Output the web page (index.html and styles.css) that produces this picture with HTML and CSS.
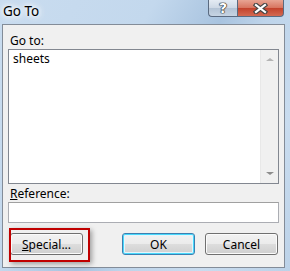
FILE: index.html
```html
<!DOCTYPE html>
<html lang="en">

<head>
    <meta charset="UTF-8">
    <title>Go To</title>
    <link rel="stylesheet" href="styles.css">
</head>

<body>
    <div class="window">
        <div class="titlebar">
            <div class="caption">Go To</div>
            <div class="caption-buttons">
                <div class="cap-btn help">?</div>
                <div class="cap-btn close">
                    <svg width="15" height="11" viewBox="0 0 15 11">
                        <path d="M3 2 L12 9 M12 2 L3 9" stroke="#464646" stroke-width="4.5" stroke-linecap="square"/>
                        <path d="M3 2 L12 9 M12 2 L3 9" stroke="#fff" stroke-width="2.2" stroke-linecap="square"/>
                    </svg>
                </div>
            </div>
        </div>

        <div class="client">
            <div class="label">Go to:</div>
            <div class="listbox">
                <div class="items">
                    <div class="item">sheets</div>
                </div>
                <div class="scrollbar">
                    <div class="arrow up"></div>
                    <div class="arrow down"></div>
                </div>
            </div>

            <div class="label ref-label"><u>R</u>eference:</div>
            <div class="textbox"></div>

            <div class="buttons">
                <div class="special-wrap">
                    <button class="btn"><u>S</u>pecial...</button>
                    <div class="highlight"></div>
                </div>
                <div class="right-buttons">
                    <button class="btn default">OK</button>
                    <button class="btn">Cancel</button>
                </div>
            </div>
        </div>
    </div>
</body>

</html>
```

FILE: styles.css
```css
html, body {
    margin: 0;
    padding: 0;
}

body {
    width: 290px;
    height: 271px;
    overflow: hidden;
    font-family: "Noto Sans", "Open Sans", sans-serif;
    font-size: 12px;
    color: #000;
}

.window {
    width: 290px;
    height: 271px;
    background: linear-gradient(120deg, #c9dcef 0%, #c3d8ed 35%, #a8c3df 52%, #bed4ea 62%, #c9dcef 80%, #bcd2e8 100%);
    display: flex;
    flex-direction: column;
}

.titlebar {
    height: 24px;
    display: flex;
    justify-content: space-between;
    align-items: flex-start;
}

.caption {
    padding: 3px 0 0 3px;
    font-size: 13.5px;
    line-height: 16px;
    text-shadow: 0 0 8px #fff, 0 0 8px #fff, 0 0 4px #fff;
}

.caption-buttons {
    display: flex;
    margin-right: 6px;
}

.cap-btn {
    height: 16px;
    border: 1px solid #5a6a80;
    border-top: none;
    display: flex;
    align-items: center;
    justify-content: center;
}

.help {
    width: 28px;
    border-radius: 0 0 0 4px;
    border-right: none;
    background: linear-gradient(#e4ebf3, #cdd8e5 50%, #b3c3d5 51%, #c6d4e3);
    color: #fff;
    font-family: "DejaVu Sans", sans-serif;
    font-weight: bold;
    font-size: 14px;
    line-height: 16px;
    text-shadow: 0 0 1px #222, 0 0 1px #222, 0 0 1px #222, 0 0 1px #222;
}

.close {
    width: 45px;
    border-radius: 0 0 4px 0;
    background: linear-gradient(#e8a493, #d7735e 50%, #c3412b 51%, #d36a52);
}

.client {
    margin: 0 5px 3px 2px;
    flex: 1;
    background: #f0f0f0;
    border: 1px solid #838c98;
    padding: 0 5px 0 5px;
}

.label {
    padding: 8px 0 0 2px;
    line-height: 16px;
    height: 16px;
}

.listbox {
    height: 133px;
    border: 1px solid #828790;
    background: #fff;
    display: flex;
}

.items {
    flex: 1;
    padding: 1px 4px;
}

.item {
    line-height: 15px;
}

.scrollbar {
    width: 17px;
    background: #f0f0f0;
    border-left: 1px solid #e8e8e8;
    display: flex;
    flex-direction: column;
    justify-content: space-between;
    align-items: center;
    padding: 8px 0 8px;
}

.arrow {
    width: 0;
    height: 0;
    border-left: 4px solid transparent;
    border-right: 4px solid transparent;
}

.arrow.up {
    border-bottom: 3px solid #b4b4b4;
}

.arrow.down {
    border-top: 3px solid #8c8c8c;
}

.ref-label {
    padding-top: 2px;
}

.textbox {
    height: 19px;
    border: 1px solid #abadb3;
    border-top-color: #a0a0a0;
    background: #fff;
}

.buttons {
    margin-top: 10px;
    display: flex;
    justify-content: space-between;
    padding-left: 2px;
}

.right-buttons {
    display: flex;
    gap: 10px;
    margin-right: 1px;
}

.btn {
    width: 73px;
    height: 22px;
    padding: 0;
    font: inherit;
    color: #000;
    border: 1px solid #707070;
    border-radius: 3px;
    background: linear-gradient(#f2f2f2, #ebebeb 50%, #dddddd 51%, #cfcfcf);
    box-shadow: inset 0 0 0 1px #fbfbfb;
}

.btn.default {
    border-color: #3c7fb1;
    box-shadow: inset 0 0 0 1px #48d8fb, inset 0 0 0 2px #e5f4fc;
}

.special-wrap {
    position: relative;
}

.highlight {
    position: absolute;
    left: -1px;
    top: -5px;
    width: 77px;
    height: 30px;
    border: 2px solid #c00000;
    box-shadow: 2px 2px 5px rgba(0, 0, 0, 0.35);
}
```
